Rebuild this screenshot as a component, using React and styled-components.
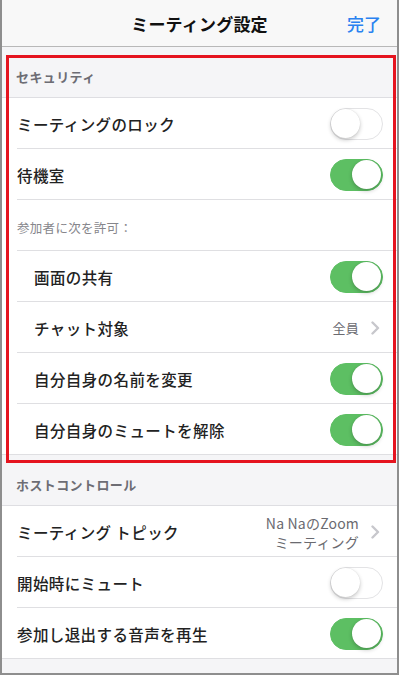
import React from 'react'
import styled, { createGlobalStyle } from 'styled-components'

const Global = createGlobalStyle`
  html, body { margin: 0; padding: 0; background: #fff; }
  body { font-family: "Noto Sans CJK JP", "Noto Sans", sans-serif; }
`

function Toggle({ on }) {
  return (
    <Track on={on ? 1 : 0}>
      <Knob on={on ? 1 : 0} />
    </Track>
  )
}

function Chevron() {
  return (
    <svg width="9" height="14" viewBox="0 0 9 14">
      <path d="M1.5 1.5 L7 7 L1.5 12.5" fill="none" stroke="#c7c7cc" strokeWidth="2.4" strokeLinecap="round" strokeLinejoin="round" />
    </svg>
  )
}

export default function App() {
  return (
    <>
      <Global />
      <Frame>
        <Header>
          <Title>ミーティング設定</Title>
          <Done>完了</Done>
        </Header>

        <SectionHead>セキュリティ</SectionHead>
        <Row>
          <Label>ミーティングのロック</Label>
          <Toggle />
        </Row>
        <Row>
          <Label>待機室</Label>
          <Toggle on />
        </Row>
        <SubHead>参加者に次を許可：</SubHead>
        <Row indent>
          <Label>画面の共有</Label>
          <Toggle on />
        </Row>
        <Row indent>
          <Label>チャット対象</Label>
          <Value>
            <ValueText>全員</ValueText>
            <Chevron />
          </Value>
        </Row>
        <Row indent>
          <Label>自分自身の名前を変更</Label>
          <Toggle on />
        </Row>
        <Row indent last>
          <Label>自分自身のミュートを解除</Label>
          <Toggle on />
        </Row>

        <SectionHead>ホストコントロール</SectionHead>
        <Row>
          <Label>ミーティング トピック</Label>
          <Value>
            <ValueText multi>Na NaのZoom<br />ミーティング</ValueText>
            <Chevron />
          </Value>
        </Row>
        <Row>
          <Label>開始時にミュート</Label>
          <Toggle />
        </Row>
        <Row last>
          <Label>参加し退出する音声を再生</Label>
          <Toggle on />
        </Row>
        <Footer />

        <Highlight />
      </Frame>
    </>
  )
}

const Frame = styled.div`
  position: relative;
  width: 399px;
  height: 675px;
  box-sizing: border-box;
  border-left: 2px solid #8e8e8e;
  border-right: 2px solid #8e8e8e;
  border-bottom: 2px solid #8e8e8e;
  background: #f5f5f7;
  overflow: hidden;
`

const Header = styled.div`
  height: 46px;
  background: #f8f8f8;
  border-bottom: 1.5px solid #b8b8b8;
  display: flex;
  align-items: center;
  justify-content: center;
  position: relative;
`

const Title = styled.div`
  font-size: 17px;
  font-weight: 700;
  color: #111;
  letter-spacing: 0.2px;
`

const Done = styled.div`
  position: absolute;
  right: 16px;
  top: 11px;
  font-size: 17px;
  color: #2a82f0;
  font-weight: 500;
`

const SectionHead = styled.div`
  height: 51px;
  box-sizing: border-box;
  padding: 20px 14px 0;
  font-size: 13px;
  font-weight: 700;
  color: #6d6d74;
  letter-spacing: 0.4px;
  border-bottom: 1px solid #dedee2;
  background: #f5f5f7;
`

const Row = styled.div`
  height: 51px;
  box-sizing: border-box;
  background: #fff;
  display: flex;
  align-items: center;
  justify-content: space-between;
  padding: 0 14px 0 ${p => (p.indent ? 32 : 15)}px;
  position: relative;
  &::after {
    content: '';
    position: absolute;
    left: ${p => (p.last ? 0 : 15)}px;
    right: 0;
    bottom: 0;
    height: 1px;
    background: #dfdfe2;
  }
`

const SubHead = styled(Row)`
  font-size: 12.5px;
  color: #86868b;
  letter-spacing: 0.3px;
  padding-top: 4px;
`

const Label = styled.div`
  font-size: 15.5px;
  font-weight: 500;
  color: #222;
  letter-spacing: 0.4px;
`

const Value = styled.div`
  display: flex;
  align-items: center;
  gap: 12px;
  margin-right: 3px;
`

const ValueText = styled.div`
  font-size: ${p => (p.multi ? 14 : 13)}px;
  color: #6a6a70;
  text-align: right;
  line-height: ${p => (p.multi ? 19 : 18)}px;
  letter-spacing: 0.2px;
  margin-top: ${p => (p.multi ? 2 : 0)}px;
`

const Track = styled.div`
  width: 53px;
  height: 32px;
  border-radius: 16px;
  box-sizing: border-box;
  background: ${p => (p.on ? '#5dbf63' : '#fff')};
  border: 1.5px solid ${p => (p.on ? '#5dbf63' : '#e3e3e5')};
  position: relative;
  flex-shrink: 0;
`

const Knob = styled.div`
  position: absolute;
  top: 0;
  left: ${p => (p.on ? 21 : 0)}px;
  width: 29px;
  height: 29px;
  border-radius: 50%;
  background: #fff;
  box-shadow: 0 2px 4px rgba(0, 0, 0, 0.22), 0 0 1px rgba(0, 0, 0, 0.15);
`

const Footer = styled.div`
  height: 14px;
  background: #f5f5f7;
`

const Highlight = styled.div`
  position: absolute;
  left: 4px;
  top: 55px;
  width: 390px;
  height: 408px;
  box-sizing: border-box;
  border: 3px solid #e5141f;
  pointer-events: none;
`
